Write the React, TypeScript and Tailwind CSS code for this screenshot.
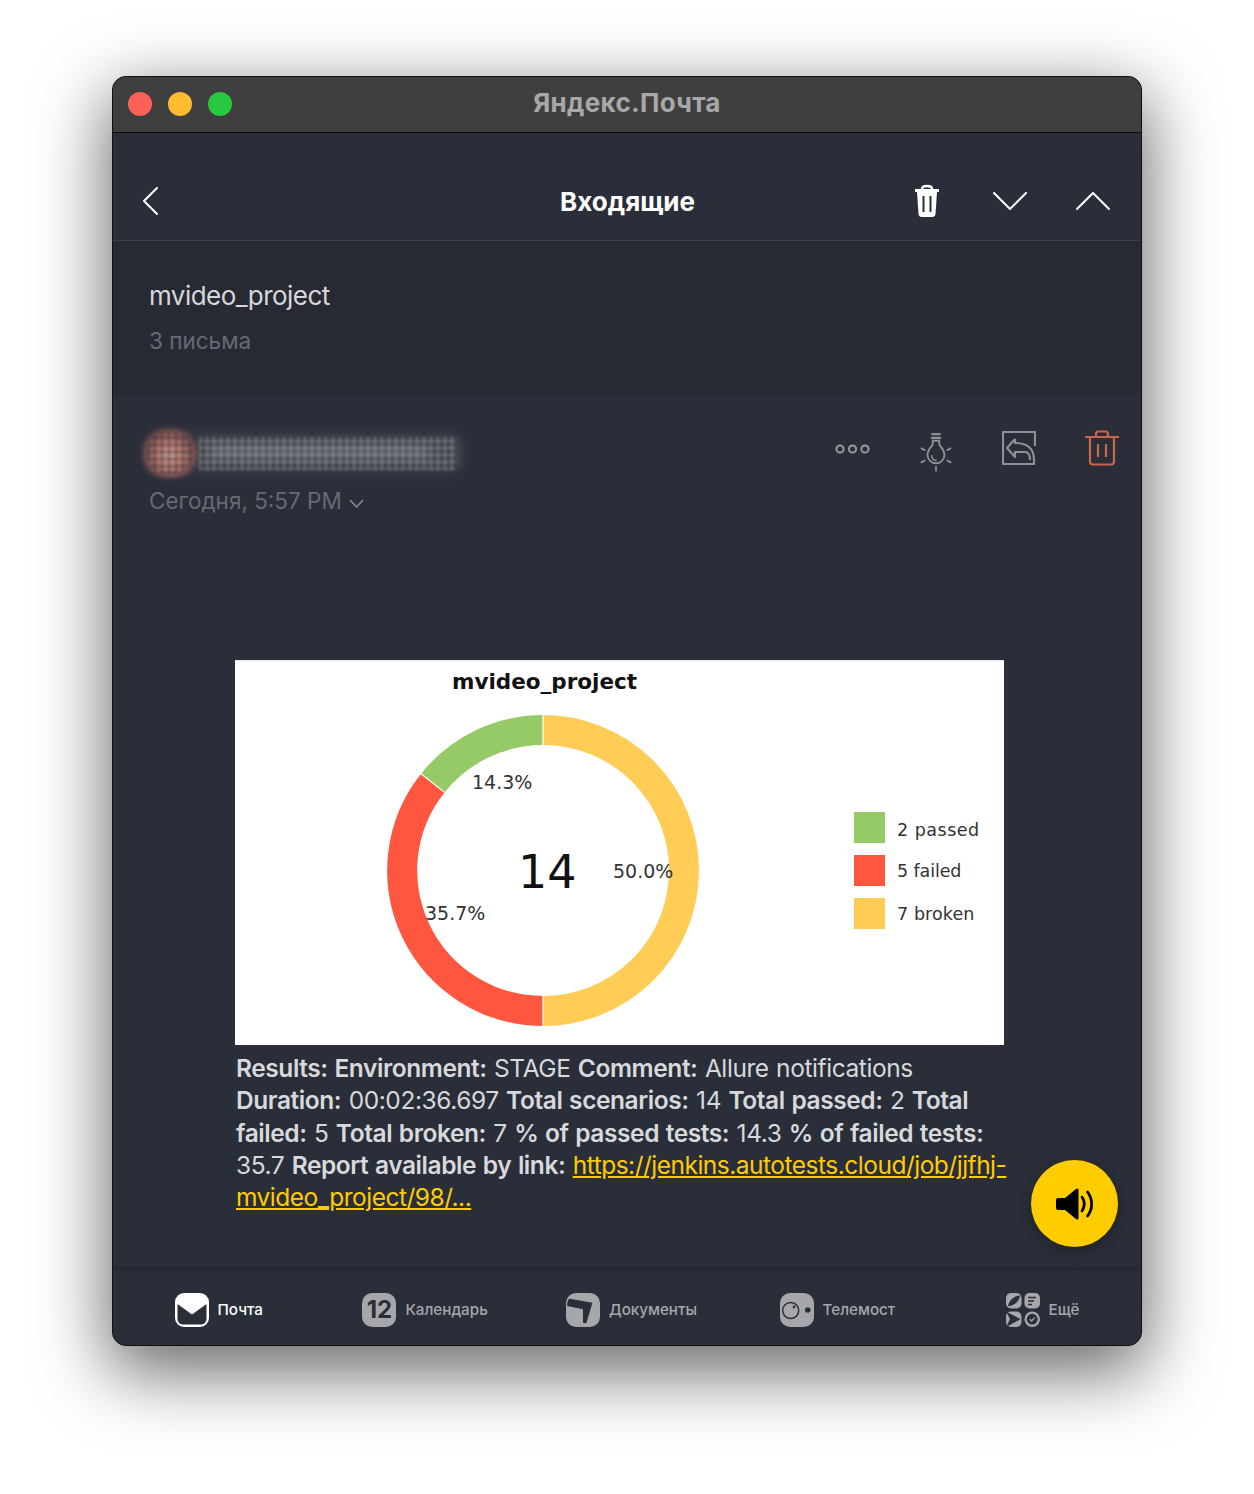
import React from "react";

const chart = '"DejaVu Sans", sans-serif';

function Chart() {
  return (
    <div className="w-[769px] h-[385px] bg-white">
      <svg width="769" height="385" viewBox="0 0 769 385" className="block">
        <path d="M0 0.5 H769" stroke="#e6e6e6" strokeWidth="1" />
        <path d="M308 70 A141 140.5 0 0 1 308 351" fill="none" stroke="#ffcc55" strokeWidth="30" />
        <path d="M308 351 A141 140.5 0 0 1 197.8 123.1" fill="none" stroke="#ff5640" strokeWidth="30" />
        <path d="M197.8 123.1 A141 140.5 0 0 1 308 70" fill="none" stroke="#95ca66" strokeWidth="30" />
        <path d="M308 55 V85 M308 336 V366 M186 113.7 L209.5 132.4" stroke="#ffffff" strokeWidth="1.2" />
        <g fontFamily={chart} fill="#333333" fontSize="19">
          <text x="237" y="129">14.3%</text>
          <text x="378" y="218">50.0%</text>
          <text x="190" y="260">35.7%</text>
        </g>
        <text x="283" y="228" fontFamily={chart} fill="#111111" fontSize="46">14</text>
        <text x="217" y="29" fontFamily={chart} fill="#111111" fontSize="21.5" fontWeight="700">mvideo_project</text>
        <rect x="619" y="152" width="31" height="31" fill="#95ca66" />
        <rect x="619" y="195" width="31" height="31" fill="#ff5640" />
        <rect x="619" y="238" width="31" height="31" fill="#ffcc55" />
        <g fontFamily={chart} fill="#333333" fontSize="17.5">
          <text x="662" y="176" letterSpacing="0.5">2 passed</text>
          <text x="662" y="217" letterSpacing="-0.1">5 failed</text>
          <text x="662" y="260" letterSpacing="0.1">7 broken</text>
        </g>
      </svg>
    </div>
  );
}

function Sender() {
  return (
    <div className="relative w-[328px] h-[48px] -ml-[4px]">
      <div className="absolute inset-x-[2px] inset-y-[0px] rounded-[18px] bg-[rgba(255,255,255,0.04)] blur-[6px]" />
      <div className="absolute left-[2px] top-[0px] w-[54px] h-[48px] rounded-[22px] bg-[radial-gradient(circle_at_50%_55%,#c99a94_0,#b5786c_35%,#7d5150_62%,transparent_95%)] blur-[2.5px]" />
      <div className="absolute left-[6px] top-[3px] w-[46px] h-[42px] rounded-[18px] bg-[repeating-linear-gradient(90deg,rgba(40,44,56,0.4)_0_2px,transparent_2px_7px),repeating-linear-gradient(0deg,rgba(40,44,56,0.4)_0_2px,transparent_2px_7px)] blur-[1px]" />
      <div className="absolute left-[56px] right-[8px] top-[7px] h-[34px] rounded-[8px] bg-[rgba(255,255,255,0.09)] blur-[3px]" />
      <div className="absolute left-[58px] right-[14px] top-[7px] h-[34px] bg-[repeating-linear-gradient(90deg,rgba(255,255,255,0.17)_0_2px,transparent_2px_7px),repeating-linear-gradient(0deg,rgba(255,255,255,0.17)_0_2px,transparent_2px_7px)] blur-[1px]" />
      <div className="absolute left-[70px] right-[40px] top-[17px] h-[13px] bg-[rgba(255,255,255,0.14)] blur-[4px]" />
    </div>
  );
}

const gray = "#a6a7ab";
const dark = "#2a2e38";

function MailIcon() {
  return (
    <svg width="34" height="34" viewBox="0 0 34 34">
      <rect width="34" height="34" rx="9" fill="#fff" />
      <path d="M2.5 11 L17 21.5 L31.5 11 V26 a5.5 5.5 0 0 1 -5.5 5.5 H8 a5.5 5.5 0 0 1 -5.5 -5.5 Z" fill={dark} />
    </svg>
  );
}

function DocsIcon() {
  return (
    <svg width="34" height="34" viewBox="0 0 34 34">
      <rect width="34" height="34" rx="10" fill={gray} />
      <path d="M1.3 13 C1 9 2 6 3.7 5.7 L26.5 9.7 L20.3 30.3 L17 30 V16.3 Z" fill={dark} />
    </svg>
  );
}

function TelemostIcon() {
  return (
    <svg width="34" height="34" viewBox="0 0 34 34">
      <rect width="34" height="34" rx="10" fill={gray} />
      <circle cx="10.7" cy="17.5" r="8" fill="none" stroke={dark} strokeWidth="1.5" />
      <circle cx="14" cy="14" r="1.4" fill={dark} />
      <circle cx="27.7" cy="17" r="2.8" fill={dark} />
    </svg>
  );
}

function MoreIcon() {
  return (
    <svg width="34" height="34" viewBox="0 0 34 34">
      <rect x="0" y="0" width="15.5" height="15.5" rx="5" fill={gray} />
      <path d="M2 13 C3 7 9 2.5 14 2.5 C13.5 8 8 13 2 13 Z" fill={dark} />
      <rect x="18.5" y="0" width="15.5" height="15.5" rx="5" fill={gray} />
      <path d="M22 4.5 H30 M22 8 H28 M22 11.5 H26" stroke={dark} strokeWidth="1.6" />
      <rect x="0" y="18.5" width="15.5" height="15.5" rx="5" fill={gray} />
      <path d="M1 20 H3 L14.5 26.2 L3 32.5 H1 L4 26.2 Z" fill={dark} />
      <rect x="18.5" y="18.5" width="15.5" height="15.5" rx="7.7" fill={gray} />
      <circle cx="26.2" cy="26.2" r="5.4" fill={dark} />
      <path d="M23.8 26.2 L25.6 28 L28.6 24.6" fill="none" stroke={gray} strokeWidth="1.4" />
    </svg>
  );
}

function NavItem({ icon, label, active }: { icon: React.ReactNode; label: string; active?: boolean }) {
  return (
    <div className="flex items-center justify-center gap-[9px]">
      {icon}
      <span className={`text-[15.2px] font-medium ${active ? "text-white" : "text-[#a6a7ab]"}`}>{label}</span>
    </div>
  );
}

const B = ({ children }: { children: React.ReactNode }) => <b className="font-semibold">{children}</b>;

export default function App() {
  return (
    <div className="w-[1254px] h-[1494px] bg-white pt-[76px] pl-[112px] font-['Inter','Noto_Sans',sans-serif]">
      <div className="relative w-[1030px] h-[1270px] rounded-[14px] overflow-hidden bg-[#2a2e38] flex flex-col border border-[#55585f] outline outline-1 outline-[#111] -outline-offset-1 shadow-[0_22px_70px_4px_rgba(0,0,0,0.6)]">
        <div className="h-[56px] shrink-0 bg-[#3f3f3f] border-b border-[#0c0c0c] flex items-center relative">
          <div className="flex gap-[16px] pl-[15px] pb-[1px]">
            <div className="w-[24px] h-[24px] rounded-full bg-[#ff5f57]" />
            <div className="w-[24px] h-[24px] rounded-full bg-[#febc2e]" />
            <div className="w-[24px] h-[24px] rounded-full bg-[#28c840]" />
          </div>
          <div className="absolute inset-x-0 top-[7px] text-center text-[26px] leading-[38px] tracking-[0.3px] font-bold text-[#a8a8a8]">Яндекс.Почта</div>
        </div>

        <div className="h-[108px] shrink-0 border-b border-[#3b3f49] grid grid-cols-[1fr_auto_1fr] items-center pt-[29px] pl-[29px] pr-[30px]">
          <svg width="16" height="28" viewBox="0 0 16 28" fill="none" stroke="#fff" strokeWidth="2" strokeLinecap="round" strokeLinejoin="round">
            <path d="M15 1 L2 14 L15 27" />
          </svg>
          <div className="text-[26px] font-bold text-white ml-[2px]">Входящие</div>
          <div className="flex items-center justify-end">
            <svg width="26" height="34" viewBox="0 0 26 34" className="mr-[52px]">
              <path d="M8 5 C8 1 18 1 18 5" fill="none" stroke="#fff" strokeWidth="2.5" />
              <path d="M1 5 H25 V8 H1 Z" fill="#fff" />
              <path d="M3 8 H23 L21.5 30 Q21.2 33 18 33 H8 Q4.8 33 4.5 30 Z" fill="#fff" />
              <path d="M9.5 12 V28 M16.5 12 V28" stroke={dark} strokeWidth="2" />
            </svg>
            <svg width="36" height="20" viewBox="0 0 36 20" fill="none" stroke="#fff" strokeWidth="2" strokeLinecap="round" strokeLinejoin="round" className="mr-[47px]">
              <path d="M2 2 L18 18 L34 2" />
            </svg>
            <svg width="36" height="20" viewBox="0 0 36 20" fill="none" stroke="#fff" strokeWidth="2" strokeLinecap="round" strokeLinejoin="round">
              <path d="M2 18 L18 2 L34 18" />
            </svg>
          </div>
        </div>

        <div className="h-[153px] shrink-0 bg-[#272a33] pl-[36px] pt-[37px]">
          <div className="text-[26px] leading-[36px] tracking-[-0.55px] text-[#d6d7da]">mvideo_project</div>
          <div className="text-[22.5px] leading-[32px] mt-[11px] text-[#666a73]">3 письма</div>
        </div>

        <div className="flex-1 relative pt-[35px]">
          <div className="flex items-start justify-between pl-[32px] pr-[22px]">
            <div>
              <Sender />
              <div className="flex items-center gap-[7px] pl-[4px] mt-[8px]">
                <span className="text-[22.5px] leading-[32px] text-[#666a73]">Сегодня, 5:57 PM</span>
                <svg width="15" height="9" viewBox="0 0 15 9" fill="none" stroke="#8a8c92" strokeWidth="1.5" className="mt-[4px]">
                  <path d="M1 1 L7.5 8 L14 1" />
                </svg>
              </div>
            </div>
            <div className="flex items-start">
              <svg width="36" height="12" viewBox="0 0 36 12" fill="none" stroke="#9a9b9f" strokeWidth="2" className="mr-[50px] mt-[14px]">
                <circle cx="6" cy="6" r="3.6" /><circle cx="18.5" cy="6" r="3.6" /><circle cx="31" cy="6" r="3.6" />
              </svg>
              <svg width="32" height="40" viewBox="0 0 34 42" fill="none" stroke="#8e8f94" strokeWidth="2" strokeLinecap="round" className="mr-[50px] mt-[3px]">
                <path d="M13 2 H21 M12.5 6 H21.5" strokeWidth="2.4" />
                <path d="M13.5 9 H20.5 V13 C21 15 26 18 26 24 A9 9 0 0 1 8 24 C8 18 13 15 13.5 13 Z" />
                <path d="M12.5 25 A5 5 0 0 0 17 30" strokeWidth="1.6" />
                <path d="M1.5 17 L5 19 M32.5 17 L29 19 M1.5 32 L5 30 M32.5 32 L29 30 M17 37 V41" />
              </svg>
              <svg width="34" height="34" viewBox="0 0 34 34" fill="none" stroke="#8e9096" strokeWidth="2.2" strokeLinejoin="round" className="mr-[49px] mt-[2px]">
                <path d="M33 15 V1 H1 V33 H32 V28" />
                <path d="M13 8 L5 17 L13 26 V21 H23 C26 21 28 24 28 29 M13 8 V12 C24 12 32 16 32 29" />
              </svg>
              <svg width="34" height="36" viewBox="0 0 34 36" fill="none" stroke="#c9654b" strokeWidth="2.2" strokeLinejoin="round" className="mt-[1px]">
                <path d="M0 7 H34 M11 7 V4 Q11 1.5 13.5 1.5 H20.5 Q23 1.5 23 4 V7 M5 7 V31.5 Q5 34.5 8 34.5 H26 Q29 34.5 29 31.5 V7 M13 14 V27 M21 14 V27" />
              </svg>
            </div>
          </div>

          <div className="mt-[143px] ml-[122px] w-[774px]">
            <Chart />
            <p className="mt-[7px] pl-[1px] text-[24.5px] leading-[32.3px] tracking-[-0.42px] [word-spacing:0.9px] text-[#d8d9dc] font-normal">
              <B>Results: Environment:</B> STAGE <B>Comment:</B> Allure notifications{" "}
              <B>Duration:</B> 00:02:36.697 <B>Total scenarios:</B> 14 <B>Total passed:</B> 2 <B>Total failed:</B> 5 <B>Total broken:</B> 7 <B>% of passed tests:</B> 14.3 <B>% of failed tests:</B> 35.7 <B>Report available by link:</B>{" "}
              <a className="text-[#ffcc00] underline tracking-[-0.5px]">https://jenkins.autotests.cloud/job/jjfhj-<wbr />mvideo_project/98/...</a>
            </p>
          </div>

          <div className="absolute right-[23px] bottom-[20px] w-[87px] h-[87px] rounded-full bg-[#ffcc00] shadow-[0_4px_14px_rgba(0,0,0,0.3)] flex items-center justify-center">
            <svg width="38" height="34" viewBox="0 0 38 34">
              <path d="M2 11 H9 L20 2 Q22.5 0.5 22.5 3 V31 Q22.5 33.5 20 32 L9 23 H2 Q0 23 0 21 V13 Q0 11 2 11 Z" fill="#000" />
              <path d="M26 10 C29 14 29 20 26 24 M31.5 5 C37 12 37 22 31.5 29" fill="none" stroke="#000" strokeWidth="2.8" strokeLinecap="round" />
            </svg>
          </div>
        </div>

        <div className="h-[78px] shrink-0 border-t-[4px] border-[#262932] grid grid-cols-[206.4px_206.4px_206.4px_205.4px_205px] items-center pl-[2.5px] pt-[4px]">
          <NavItem active icon={<MailIcon />} label="Почта" />
          <NavItem
            icon={
              <div className="w-[34px] h-[34px] rounded-[10px] bg-[#a6a7ab] flex items-center justify-center text-[24px] font-bold text-[#2a2e38]">12</div>
            }
            label="Календарь"
          />
          <NavItem icon={<DocsIcon />} label="Документы" />
          <NavItem icon={<TelemostIcon />} label="Телемост" />
          <NavItem icon={<MoreIcon />} label="Ещё" />
        </div>
      </div>
    </div>
  );
}
